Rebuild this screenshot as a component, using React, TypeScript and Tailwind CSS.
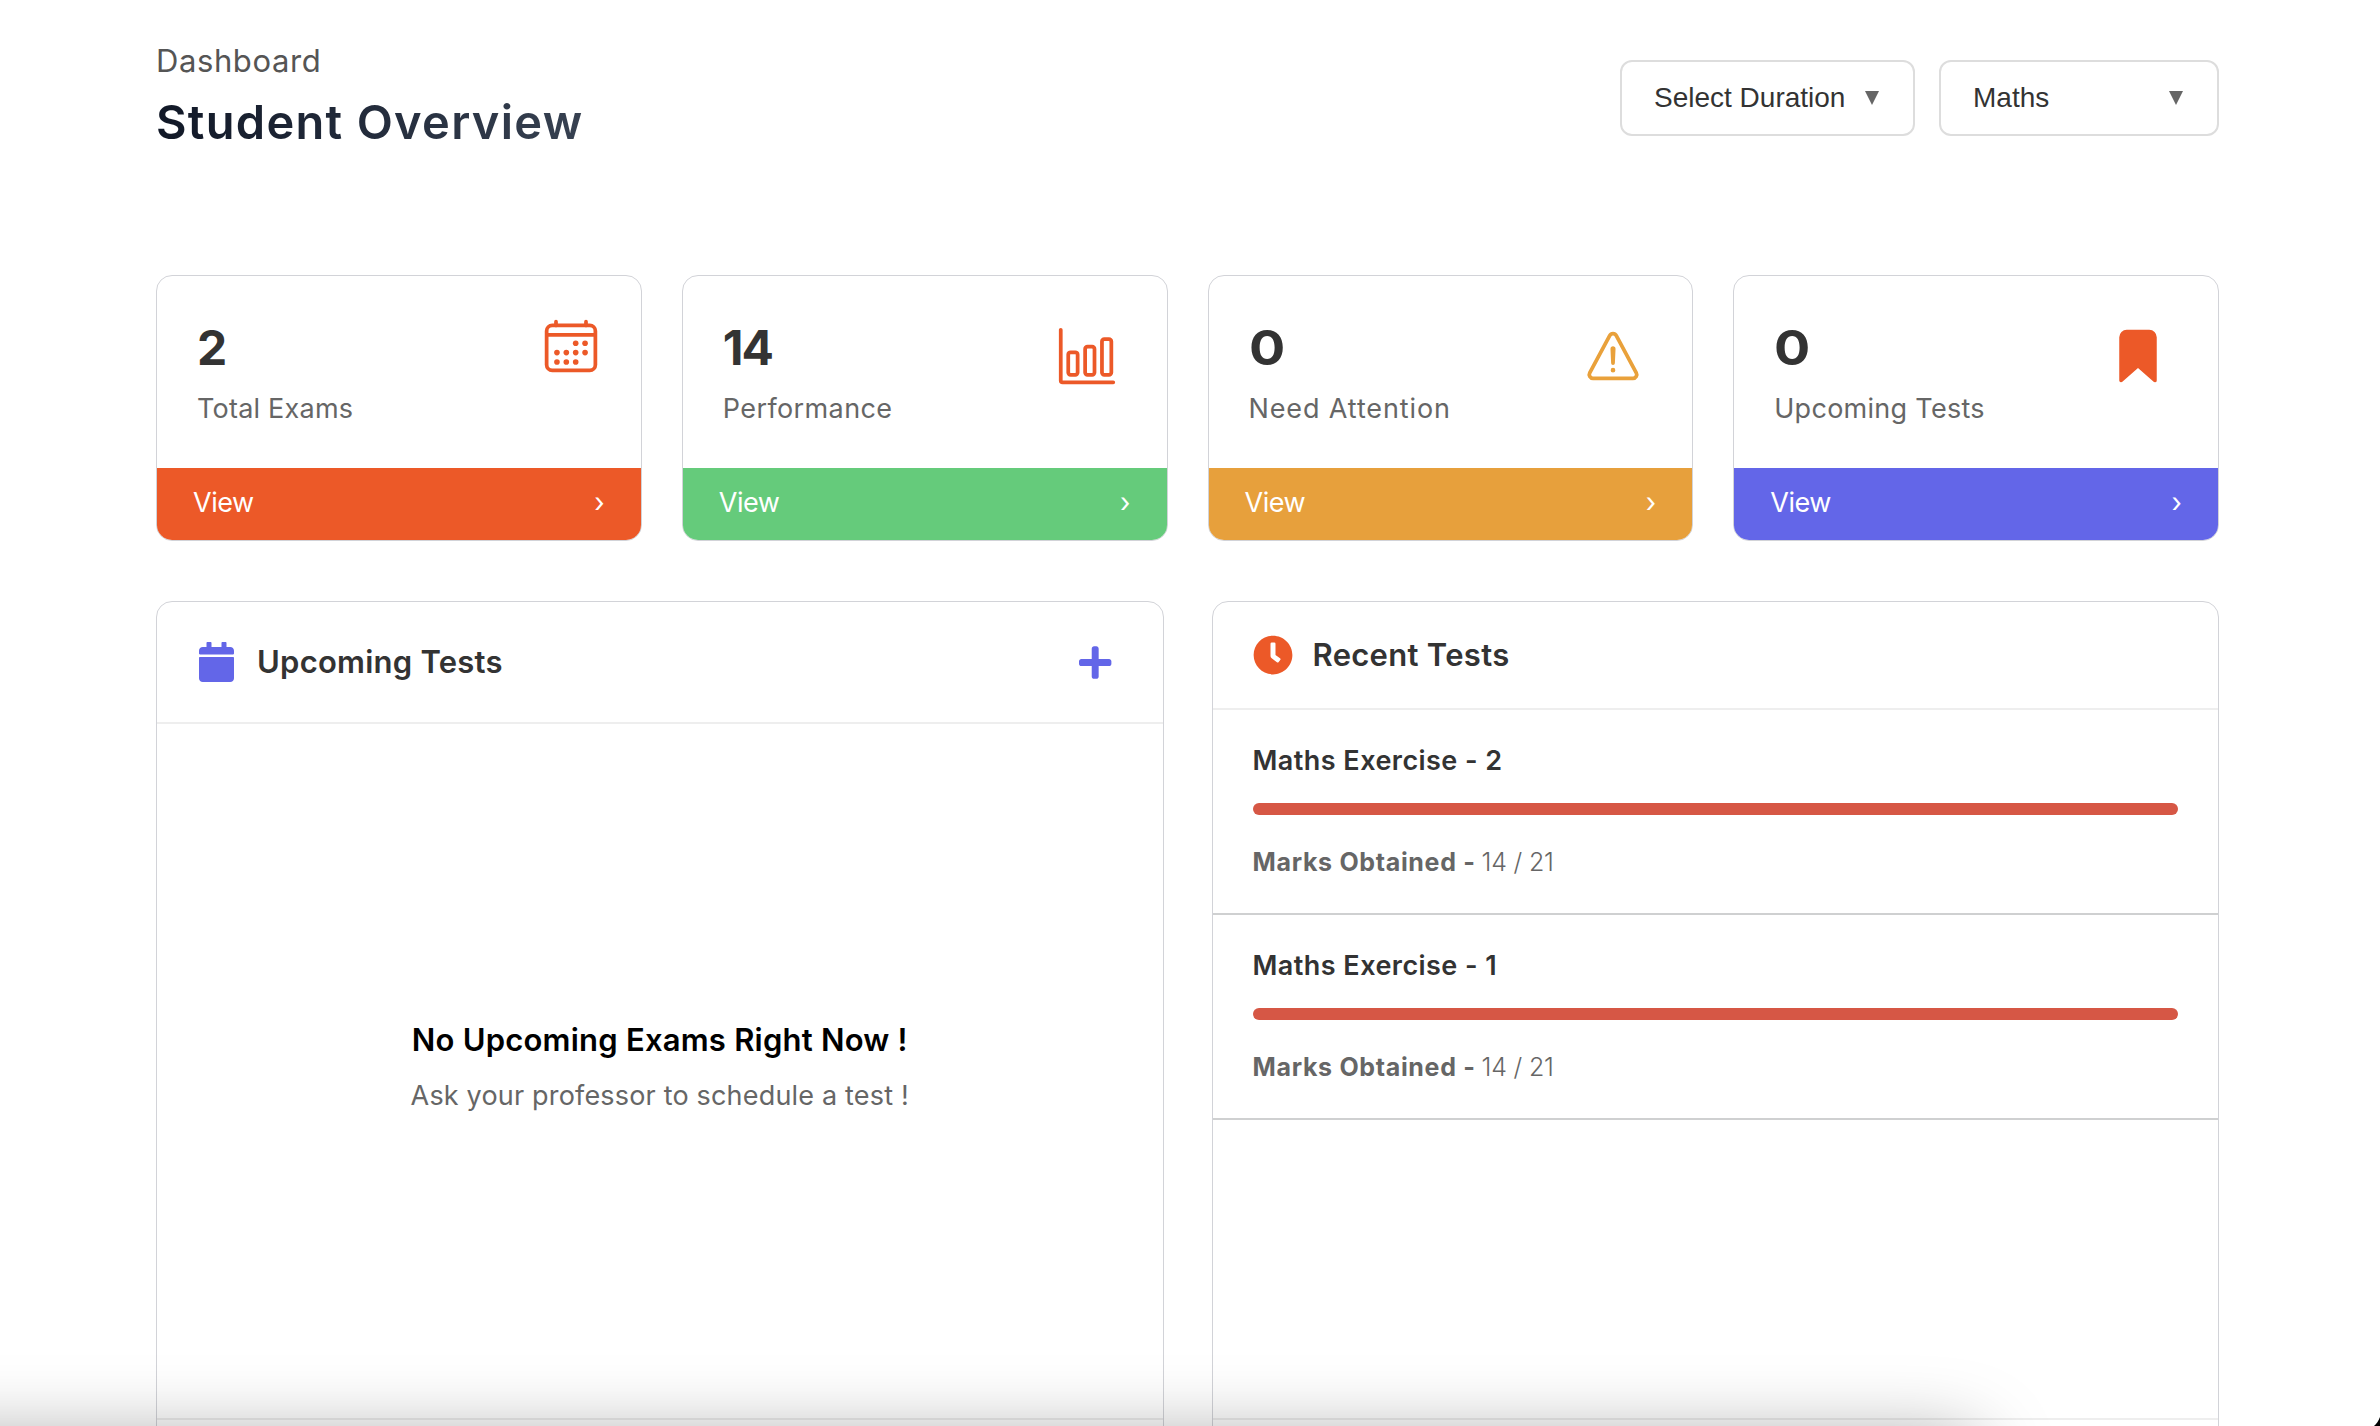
import React from "react";
import { IoCalendarOutline, IoBarChartOutline, IoWarningOutline, IoBookmark } from "react-icons/io5";
import { FaCalendar, FaPlus, FaClock } from "react-icons/fa";

type Stat = {
  value: string;
  valueClass: string;
  label: string;
  labelClass: string;
  barClass: string;
  icon: React.ReactNode;
};

const stats: Stat[] = [
  {
    value: "2",
    valueClass: "",
    label: "Total Exams",
    labelClass: "tracking-[0.22px]",
    barClass: "bg-[#ec5928]",
    icon: <IoCalendarOutline className="mt-10 mr-10 size-15 text-[#ec5928]" />,
  },
  {
    value: "14",
    valueClass: "tracking-[-2px]",
    label: "Performance",
    labelClass: "tracking-[0.4px]",
    barClass: "bg-[#65cb7b]",
    icon: <IoBarChartOutline className="mt-[50px] mr-[50px] size-15 text-[#ec5928]" />,
  },
  {
    value: "0",
    valueClass: "origin-left scale-x-112",
    label: "Need Attention",
    labelClass: "tracking-[0.88px]",
    barClass: "bg-[#e7a03c]",
    icon: <IoWarningOutline className="mt-[50px] mr-[49px] size-15 text-[#e9a13b]" />,
  },
  {
    value: "0",
    valueClass: "origin-left scale-x-112",
    label: "Upcoming Tests",
    labelClass: "tracking-[0.28px]",
    barClass: "bg-[#6366e8]",
    icon: <IoBookmark className="mt-[50px] mr-[50px] size-15 text-[#ec5928]" />,
  },
];

const recentTests = [
  { name: "Maths Exercise - 2", marks: "14 / 21" },
  { name: "Maths Exercise - 1", marks: "14 / 21" },
];

function SelectBox({ label, className }: { label: string; className: string }) {
  return (
    <div
      className={`flex h-19 items-center justify-between rounded-xl border-2 border-[#dddddd] bg-white pr-[34px] pl-8 ${className}`}
    >
      <span className="pb-px font-['Liberation_Sans',Arial,sans-serif] text-[28px] leading-8 whitespace-nowrap text-[#333333]">
        {label}
      </span>
      <svg viewBox="0 0 14 14" className="mb-px size-3.5 fill-[#666666]">
        <path d="M0 0h14L7 14z" />
      </svg>
    </div>
  );
}

function StatCard({ stat }: { stat: Stat }) {
  return (
    <div className="flex h-[266px] flex-col overflow-hidden rounded-2xl border border-[#d2d3d8] bg-white">
      <div className="flex h-48 shrink-0 items-start justify-between pl-10">
        <div className="pt-[42px]">
          <div className={`text-[48px] leading-[60px] font-bold text-[#333333] ${stat.valueClass}`}>{stat.value}</div>
          <div className={`mt-[13px] text-[27px] leading-9 text-[#666666] ${stat.labelClass}`}>{stat.label}</div>
        </div>
        {stat.icon}
      </div>
      <div className={`flex flex-1 items-center justify-between pr-9 pb-0.5 pl-9 text-white ${stat.barClass}`}>
        <span className="text-[27px] leading-9 tracking-[-0.5px]">View</span>
        <span className="text-[27px] leading-9">›</span>
      </div>
    </div>
  );
}

export default function App() {
  return (
    <div className="relative h-[1426px] w-[2380px] overflow-hidden bg-white font-[Inter,sans-serif]">
      <div className="ml-[156px] flex w-[2063px] flex-col">
        <header className="flex h-[275px] items-start justify-between">
          <div className="pt-[41px]">
            <p className="text-[31px] leading-10 tracking-[0.6px] text-[#555555]">Dashboard</p>
            <h1 className="mt-[11px] bg-linear-to-r from-[#111827] to-[#374151] bg-clip-text text-[47px] leading-[60px] font-semibold tracking-[1.3px] text-transparent">
              Student Overview
            </h1>
          </div>
          <div className="flex gap-6 pt-15">
            <SelectBox label="Select Duration" className="w-[295px]" />
            <SelectBox label="Maths" className="w-[280px]" />
          </div>
        </header>

        <section className="grid grid-cols-4 gap-10">
          {stats.map((stat) => (
            <StatCard key={stat.label} stat={stat} />
          ))}
        </section>

        <section className="mt-15 grid grid-cols-2 gap-12">
          <div className="h-[900px] rounded-2xl border border-[#d2d3d8]">
            <div className="flex h-[122px] items-center border-b-2 border-[#eeeeee] pr-[51px] pl-[42px]">
              <FaCalendar className="h-10 w-[35px] text-[#6366e8]" />
              <h2 className="ml-[23px] text-[31px] leading-10 font-semibold tracking-[0.24px] text-[#333333]">
                Upcoming Tests
              </h2>
              <FaPlus className="ml-auto h-[37px] w-[32.4px] text-[#6366e8]" />
            </div>
            <div className="flex h-[694px] flex-col items-center pt-[296px]">
              <p className="text-[31px] leading-10 font-semibold tracking-[0.22px] text-black">
                No Upcoming Exams Right Now !
              </p>
              <p className="mt-[18px] text-[27px] leading-9 tracking-[0.18px] text-[#666666]">
                Ask your professor to schedule a test !
              </p>
            </div>
            <div className="border-t-2 border-[#eeeeee]" />
          </div>

          <div className="h-[900px] rounded-2xl border border-[#d2d3d8]">
            <div className="flex h-[108px] items-center border-b-2 border-[#eeeeee] px-10">
              <FaClock className="size-10 text-[#ec5928]" />
              <h2 className="ml-5 text-[31px] leading-10 font-semibold tracking-[0.3px] text-[#333333]">
                Recent Tests
              </h2>
            </div>
            <div className="h-[708px]">
              {recentTests.map((test) => (
                <div key={test.name} className="h-[205px] border-b-2 border-[#cfd0d1] px-10 pt-[33px]">
                  <h3 className="text-[27px] leading-9 font-semibold tracking-[0.45px] text-[#333333]">
                    {test.name}
                  </h3>
                  <div className="mt-6 h-3 rounded-full bg-[#d65745]" />
                  <p className="mt-[31px] flex gap-1.5 text-[25px] leading-8 text-[#666666]">
                    <span className="font-bold tracking-[0.68px]">Marks Obtained -</span>
                    <span className="font-light tracking-[-0.2px]">{test.marks}</span>
                  </p>
                </div>
              ))}
            </div>
            <div className="border-t-2 border-[#eeeeee]" />
          </div>
        </section>
      </div>

      <div className="pointer-events-none absolute top-[1438px] -left-[200px] h-[400px] w-[2178px] rounded-[20px] shadow-[0_0_76px_rgba(0,0,0,0.36)]" />
      <svg viewBox="0 0 6 9" className="absolute right-0 bottom-0 h-[9px] w-1.5 fill-black">
        <path d="M6 0v9H0C2.500 7 4.500 4 6 0z" />
      </svg>
    </div>
  );
}
